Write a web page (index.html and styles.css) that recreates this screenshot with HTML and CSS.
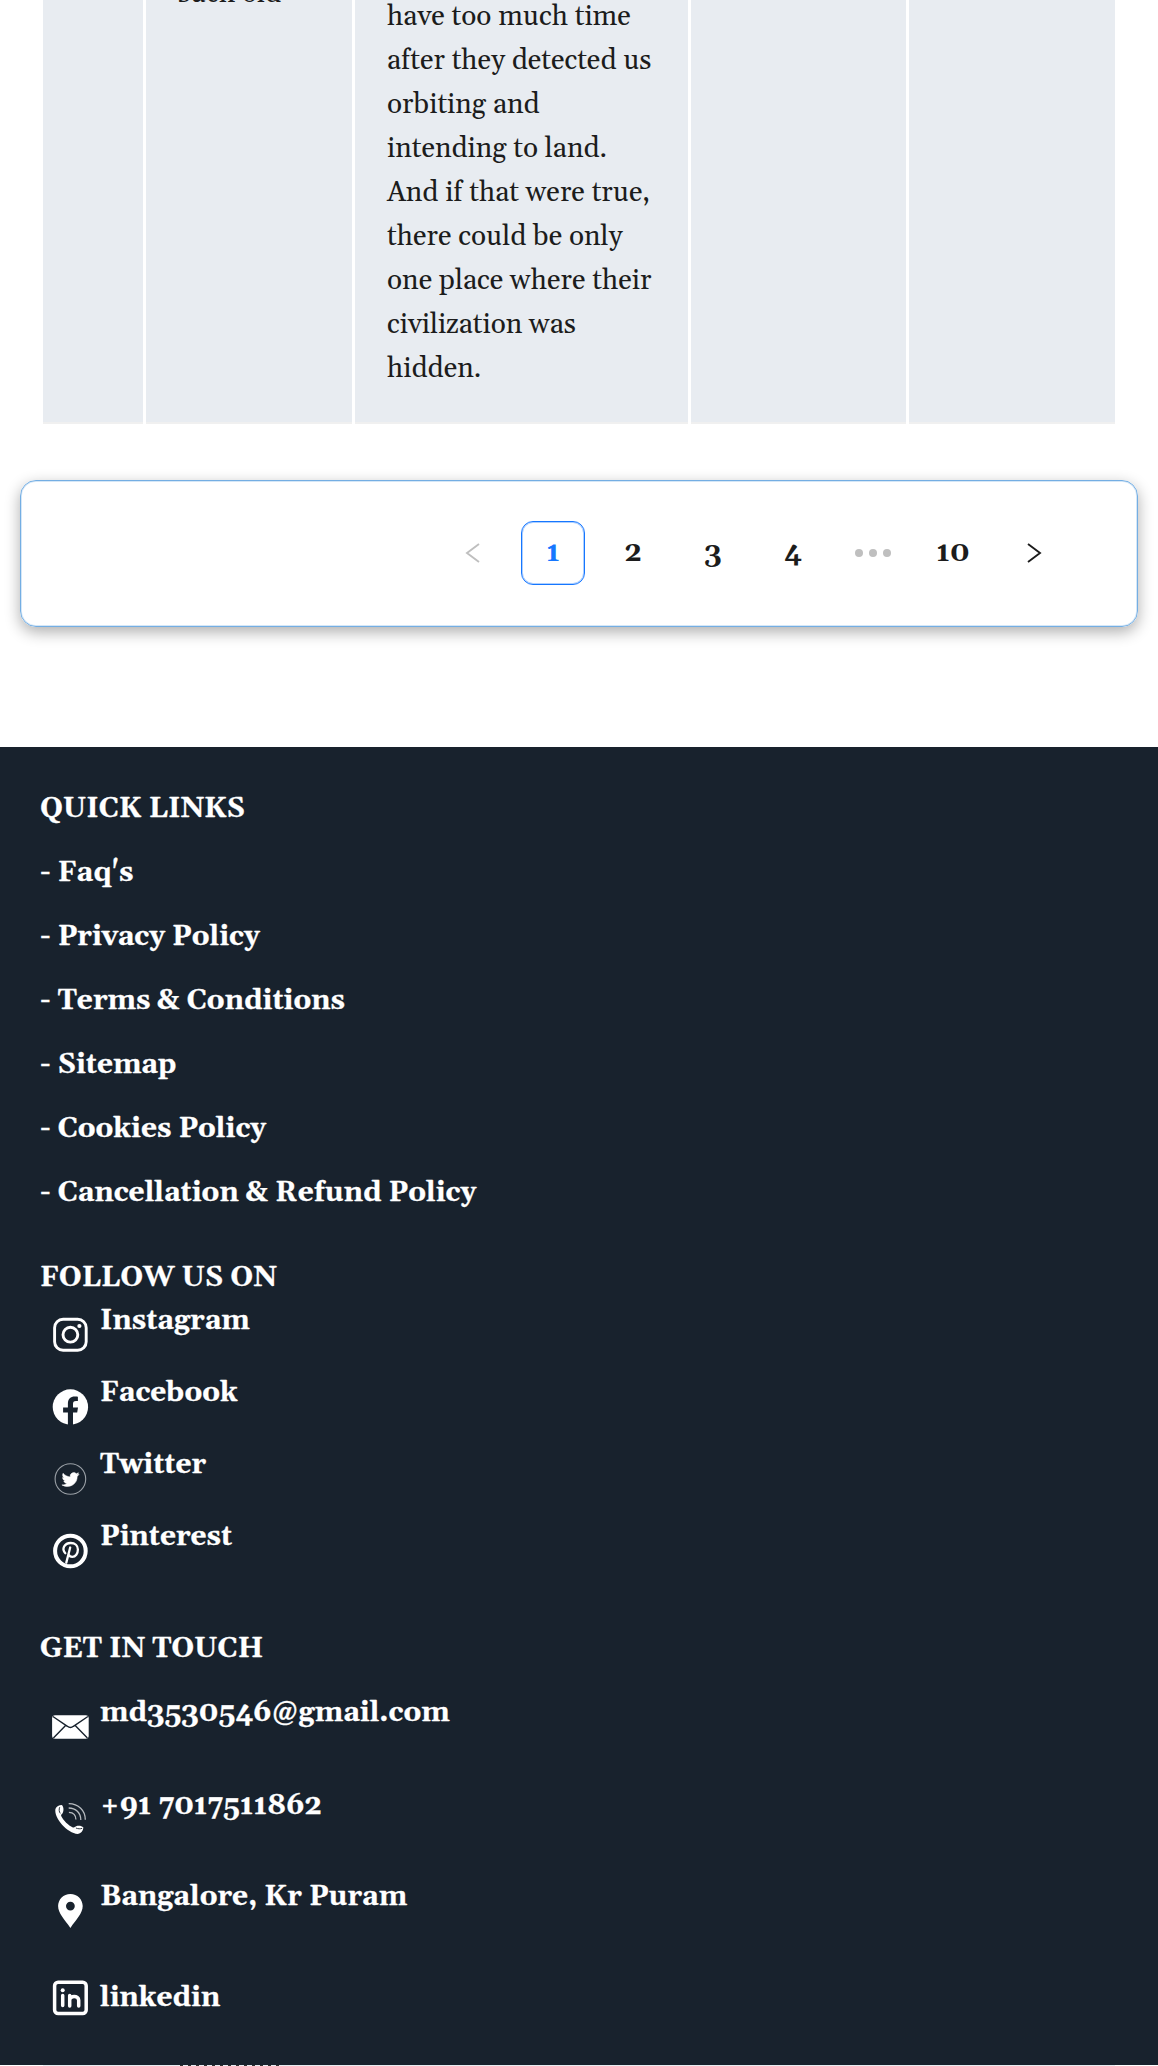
FILE: index.html
```html
<!DOCTYPE html>
<html lang="en">
<head>
<meta charset="utf-8">
<title>Records</title>
<link rel="stylesheet" href="styles.css">
</head>
<body>
<div class="page">
  <main class="content">
    <div class="row">
      <div class="cell"></div>
      <div class="cell"><p class="cell-title">such old</p></div>
      <div class="cell"><p class="cell-text">have too much time<br>after they detected us<br>orbiting and<br>intending to land.<br>And if that were true,<br>there could be only<br>one place where their<br>civilization was<br>hidden.</p></div>
      <div class="cell"></div>
      <div class="cell"></div>
    </div>
    <nav class="pager">
      <span class="page-item muted"><svg width="20" height="20" viewBox="0 0 20 20"><path d="M16 1 4 10l12 9"/></svg></span>
      <span class="page-item current">1</span>
      <span class="page-item">2</span>
      <span class="page-item">3</span>
      <span class="page-item">4</span>
      <span class="page-item dots"><i></i><i></i><i></i></span>
      <span class="page-item">10</span>
      <span class="page-item"><svg width="20" height="20" viewBox="0 0 20 20"><path d="M5 1l12 9-12 9"/></svg></span>
    </nav>
  </main>
  <footer class="footer">
    <section class="links">
      <h2>QUICK LINKS</h2>
      <a>- Faq's</a>
      <a>- Privacy Policy</a>
      <a>- Terms &amp; Conditions</a>
      <a>- Sitemap</a>
      <a>- Cookies Policy</a>
      <a>- Cancellation &amp; Refund Policy</a>
    </section>
    <section class="social">
      <h2>FOLLOW US ON</h2>
      <a class="entry"><svg class="icon" viewBox="-.4 0 40 40"><rect x="4.200" y="4.200" width="31.600" height="31" rx="8.500" fill="none" stroke="#fff" stroke-width="2.900"/><circle cx="20" cy="19.700" r="7.400" fill="none" stroke="#fff" stroke-width="2.900"/><circle cx="29" cy="11" r="2.100" fill="#fff"/></svg>Instagram</a>
      <a class="entry"><svg class="icon" viewBox="-.4 0 40 40"><circle cx="20" cy="20" r="17.700" fill="#fff"/><path d="M17.500 39V25.600h-4.800v-5h4.800v-3.900c0-4.800 2.800-7.200 6.800-7.200 1.600 0 3.200.2 3.200.2v4.400h-1.900c-2.400 0-3 1.300-3 2.900v3.600h5l-.8 5h-4.200V39z" fill="#18222d"/></svg>Facebook</a>
      <a class="entry"><svg class="icon" viewBox="-.4 0 40 40"><circle cx="20" cy="20" r="15.300" fill="none" stroke="#9aa0a6" stroke-width="1.100"/><path d="M28.600 15.200c-.6.3-1.300.5-2 .6.7-.5 1.300-1.100 1.500-2-.7.4-1.400.7-2.200.9a3.500 3.500 0 0 0-6 3.200c-3-.2-5.500-1.600-7.200-3.700-.9 1.600-.5 3.600 1.100 4.700-.6 0-1.100-.2-1.600-.4 0 1.700 1.200 3.100 2.800 3.500-.5.1-1 .1-1.600 0 .4 1.400 1.700 2.400 3.300 2.500-1.500 1.100-3.300 1.600-5.200 1.400 7.200 4.200 15.500-.5 15.300-8.600.7-.5 1.300-1.100 1.800-1.900z" fill="#fff" stroke="#fff" stroke-width=".5"/></svg>Twitter</a>
      <a class="entry"><svg class="icon" viewBox="-.4 0 40 40"><circle cx="20" cy="20" r="15.300" fill="none" stroke="#fff" stroke-width="4"/><path d="M15.900 31.600 19.800 16.500M14.900 22.200c-4-4-1-10.200 5.400-10.200 4.300 0 7.200 2.800 7.200 6.500 0 4.200-2.400 7.300-5.600 7.300-1.800 0-3.200-1-3.700-2.300" fill="none" stroke="#fff" stroke-width="2.300" stroke-linecap="round"/></svg>Pinterest</a>
    </section>
    <section class="contact">
      <h2>GET IN TOUCH</h2>
      <a class="entry"><svg class="icon" viewBox="-.4 0 40 40"><rect x="1.700" y="8.300" width="36.600" height="23.400" rx="3" fill="#fff"/><path d="M2.500 9.500 17 19.300q3 2.600 6 0L37.500 9.500M3 31l12.200-12.500M37 31 24.800 18.500" fill="none" stroke="#18222d" stroke-width="1.400"/></svg>md3530546@gmail.com</a>
      <a class="entry phone"><svg class="icon" viewBox="-.4 0 40 40"><path d="M5 9c1-2.800 3.800-4 6.300-4 1.900 1.200 2.400 5.500.9 8.200-1 1.300-1.800 1.400-1.400 2.800 2.300 4.600 7 9.300 11.700 11.500 1.300.3 1.900-.6 3.200-1.200 2.600-.9 5.500-.5 7.300 1.200-.3 3.600-2.600 6-5.600 6.500C17 33 3.500 18.500 5 9z" fill="#fff"/><path d="M9.300 7.200c-.9 2.200-.6 4.800.6 6.200M25.500 28c2 .9 4.500 1.100 6.300.3" fill="none" stroke="#18222d" stroke-width=".9"/><path d="M18.500 12.300c4.500.2 7 3 7 7.300M18.300 8c7 .2 12 4.700 12.100 12M18.300 3.600c9.700.2 16.700 6.700 16.600 16.200" fill="none" stroke="#b8bcc0" stroke-width="1.300"/></svg>+91 7017511862</a>
      <a class="entry"><svg class="icon" viewBox="-.4 0 40 40"><path fill-rule="evenodd" d="M20 3C13 3 7.700 8.400 7.700 15.100 7.700 22.500 14.200 28.500 20 37c5.800-8.500 12.300-14.500 12.300-21.900C32.300 8.400 27 3 20 3zm0 7.700a4.400 4.400 0 1 1 0 8.800 4.400 4.400 0 0 1 0-8.800z" fill="#fff"/></svg>Bangalore, Kr Puram</a>
      <a class="entry linkedin"><svg class="icon" viewBox="-.4 0 40 40"><rect x="4.200" y="4.200" width="31.600" height="31.400" rx="3.500" fill="none" stroke="#fff" stroke-width="3.500"/><circle cx="12.300" cy="12.300" r="2" fill="#fff"/><path d="M12.300 17.500v10M19.300 28V17.500M19.300 22c0-4.500 9-4.700 9 .3V28" fill="none" stroke="#fff" stroke-width="3.500" stroke-linecap="round"/></svg>linkedin</a>
    </section>
  </footer>
  <div class="under"></div>
</div>
</body>
</html>
```
FILE: styles.css
```css
* { box-sizing: border-box; }
body {
  margin: 0;
  background: #fff;
  color: #1c1c1c;
  font: 28px/44px Gelasio, Georgia, "Liberation Serif", serif;
}
.page { height: 2066px; overflow: hidden; }
.content { height: 747px; padding: 0 20px; }
.row {
  display: grid;
  grid-template-columns: 100px 206px 333px 215px 206px;
  gap: 3px;
  width: 1072px;
  height: 424px;
  margin-left: 23px;
}
.cell {
  padding: 0 32px;
  background: #e8ecf1;
  border-bottom: 2px solid #f0f0f0;
  white-space: nowrap;
}
.cell-title { margin: -28px 0 0; }
.cell-text { margin: -5px 0 0; }
.pager {
  display: flex;
  justify-content: flex-end;
  align-items: center;
  gap: 16px;
  height: 147px;
  margin-top: 56px;
  padding: 0 72px 1px 0;
  border: 1px solid #74aee3;
  border-radius: 16px;
  box-shadow: 0 5px 15px rgba(0, 0, 0, .32), inset 0 0 0 1px rgba(116, 174, 227, .3);
  font-weight: 700;
}
.page-item {
  display: flex;
  align-items: center;
  justify-content: center;
  width: 64px;
  height: 64px;
  border-radius: 12px;
}
.page-item svg { fill: none; stroke: #1c1c1c; stroke-width: 1.900; }
.page-item.muted svg { stroke: #bfbfbf; }
.current {
  border: 1px solid #1677ff;
  box-shadow: inset 0 0 0 1px rgba(22, 119, 255, .35);
  color: #1677ff;
}
.dots { gap: 6px; }
.dots i { width: 8px; height: 8px; border-radius: 50%; background: #bfbfbf; }
.footer {
  height: 1318px;
  padding: 40px 40px 0;
  background: #18222d;
  color: #fff;
  font-weight: 700;
  -webkit-text-stroke: .3px #fff;
}
.footer h2 { margin: 0; font-size: 28px; line-height: 44px; }
.links { display: flex; flex-direction: column; gap: 20px; }
.social { margin-top: 41px; }
.social h2 { height: 43px; }
.entry { display: flex; align-items: flex-start; height: 72px; padding-left: 10px; }
.icon { flex: none; width: 40px; height: 40px; margin: 16px 10px 0 0; }
.contact { margin-top: 40px; }
.contact h2 { margin-bottom: 20px; }
.contact .entry { height: 92px; }
.contact .phone { height: 91px; margin-top: 1px; }
.contact .linkedin { height: 44px; margin-top: 9px; }
.linkedin .icon { margin-top: 2px; }
.under {
  height: 1px;
  margin: 0 43px;
  background:
    repeating-linear-gradient(90deg, #333 0 3px, transparent 3px 8px) 137px 0 / 100px 1px no-repeat,
    #e8ecf1;
}
```
